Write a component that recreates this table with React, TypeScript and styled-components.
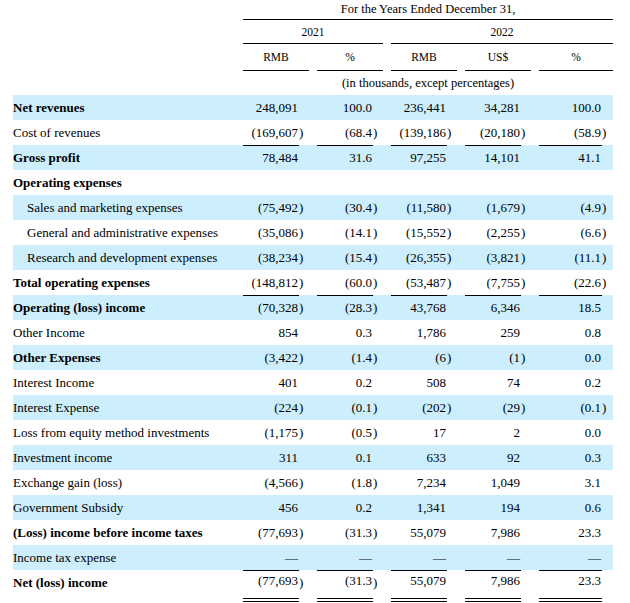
import React from 'react';
import styled, { createGlobalStyle, css } from 'styled-components';

const GlobalStyle = createGlobalStyle`
  body {
    margin: 0;
    background: #fff;
    color: #000;
    font-family: "Liberation Serif", "Times New Roman", serif;
  }
`;

const GRID = '222px repeat(4, 66px) 74px';

type Rule = 'top' | 'total';

interface LineItem {
  label: string;
  bold?: boolean;
  indent?: boolean;
  rule?: Rule;
  values?: string[];
}

const ITEMS: LineItem[] = [
  { label: 'Net revenues', bold: true, values: ['248,091', '100.0', '236,441', '34,281', '100.0'] },
  { label: 'Cost of revenues', values: ['(169,607)', '(68.4)', '(139,186)', '(20,180)', '(58.9)'] },
  { label: 'Gross profit', bold: true, rule: 'top', values: ['78,484', '31.6', '97,255', '14,101', '41.1'] },
  { label: 'Operating expenses', bold: true },
  { label: 'Sales and marketing expenses', indent: true, values: ['(75,492)', '(30.4)', '(11,580)', '(1,679)', '(4.9)'] },
  { label: 'General and administrative expenses', indent: true, values: ['(35,086)', '(14.1)', '(15,552)', '(2,255)', '(6.6)'] },
  { label: 'Research and development expenses', indent: true, values: ['(38,234)', '(15.4)', '(26,355)', '(3,821)', '(11.1)'] },
  { label: 'Total operating expenses', bold: true, values: ['(148,812)', '(60.0)', '(53,487)', '(7,755)', '(22.6)'] },
  { label: 'Operating (loss) income', bold: true, rule: 'top', values: ['(70,328)', '(28.3)', '43,768', '6,346', '18.5'] },
  { label: 'Other Income', values: ['854', '0.3', '1,786', '259', '0.8'] },
  { label: 'Other Expenses', bold: true, values: ['(3,422)', '(1.4)', '(6)', '(1)', '0.0'] },
  { label: 'Interest Income', values: ['401', '0.2', '508', '74', '0.2'] },
  { label: 'Interest Expense', values: ['(224)', '(0.1)', '(202)', '(29)', '(0.1)'] },
  { label: 'Loss from equity method investments', values: ['(1,175)', '(0.5)', '17', '2', '0.0'] },
  { label: 'Investment income', values: ['311', '0.1', '633', '92', '0.3'] },
  { label: 'Exchange gain (loss)', values: ['(4,566)', '(1.8)', '7,234', '1,049', '3.1'] },
  { label: 'Government Subsidy', values: ['456', '0.2', '1,341', '194', '0.6'] },
  { label: '(Loss) income before income taxes', bold: true, values: ['(77,693)', '(31.3)', '55,079', '7,986', '23.3'] },
  { label: 'Income tax expense', values: ['—', '—', '—', '—', '—'] },
  { label: 'Net (loss) income', bold: true, rule: 'total', values: ['(77,693)', '(31.3)', '55,079', '7,986', '23.3'] },
];

const Page = styled.div`
  padding-left: 13px;
  width: 600px;
`;

const HeadRow = styled.div<{ $h: number }>`
  display: grid;
  grid-template-columns: ${GRID};
  column-gap: 8px;
  height: ${(p) => p.$h}px;
`;

const HeadCell = styled.div<{ $span: string; $ruled?: boolean; $size?: number }>`
  grid-column: ${(p) => p.$span};
  display: flex;
  align-items: center;
  justify-content: center;
  font-size: ${(p) => p.$size ?? 12.5}px;
  box-sizing: border-box;
  ${(p) =>
    p.$ruled &&
    css`
      border-bottom: 1px solid #000;
    `}
`;

const Row = styled.div<{ $shaded: boolean }>`
  display: grid;
  grid-template-columns: ${GRID};
  column-gap: 8px;
  align-items: start;
  min-height: 25px;
  background: ${(p) => (p.$shaded ? '#cdeefc' : 'transparent')};
  font-size: 13px;
`;

const Label = styled.div<{ $bold?: boolean; $indent?: boolean }>`
  display: flex;
  align-items: center;
  height: 25px;
  padding-left: ${(p) => (p.$indent ? 14 : 0)}px;
  font-weight: ${(p) => (p.$bold ? 700 : 400)};
  white-space: nowrap;
`;

const Amount = styled.div<{ $last?: boolean }>`
  display: grid;
  grid-template-columns: 1fr ${(p) => (p.$last ? 11 : 10)}px;
  align-items: start;
`;

const Figure = styled.span<{ $rule?: Rule }>`
  display: flex;
  align-items: center;
  justify-content: flex-end;
  padding-right: 1px;
  box-sizing: border-box;
  height: 25px;
  ${(p) =>
    p.$rule &&
    css`
      border-top: 1px solid #000;
    `}
  ${(p) =>
    p.$rule === 'total' &&
    css`
      height: 32px;
      padding-bottom: 7px;
      border-bottom: 4px double #000;
    `}
`;

const Paren = styled.span`
  display: flex;
  align-items: center;
  height: 25px;
`;

function AmountCell({ value, rule, last }: { value?: string; rule?: Rule; last?: boolean }) {
  const negative = !!value && value.endsWith(')');
  return (
    <Amount $last={last}>
      <Figure $rule={rule}>{negative ? value!.slice(0, -1) : value}</Figure>
      <Paren>{negative ? ')' : ''}</Paren>
    </Amount>
  );
}

export default function App() {
  return (
    <Page>
      <GlobalStyle />
      <HeadRow $h={20}>
        <HeadCell $span="2 / -1" $ruled>
          For the Years Ended December 31,
        </HeadCell>
      </HeadRow>
      <HeadRow $h={24}>
        <HeadCell $span="2 / 4" $ruled $size={11.5}>
          2021
        </HeadCell>
        <HeadCell $span="4 / -1" $ruled $size={11.5}>
          2022
        </HeadCell>
      </HeadRow>
      <HeadRow $h={27}>
        {['RMB', '%', 'RMB', 'US$', '%'].map((h, i) => (
          <HeadCell key={i} $span={`${i + 2}`} $ruled $size={11.5}>
            {h}
          </HeadCell>
        ))}
      </HeadRow>
      <HeadRow $h={24}>
        <HeadCell $span="2 / -1">(in thousands, except percentages)</HeadCell>
      </HeadRow>
      {ITEMS.map((item, r) => (
        <Row key={item.label} $shaded={r % 2 === 0}>
          <Label $bold={item.bold} $indent={item.indent}>
            {item.label}
          </Label>
          {[0, 1, 2, 3, 4].map((c) => (
            <AmountCell key={c} value={item.values?.[c]} rule={item.values ? item.rule : undefined} last={c === 4} />
          ))}
        </Row>
      ))}
    </Page>
  );
}
